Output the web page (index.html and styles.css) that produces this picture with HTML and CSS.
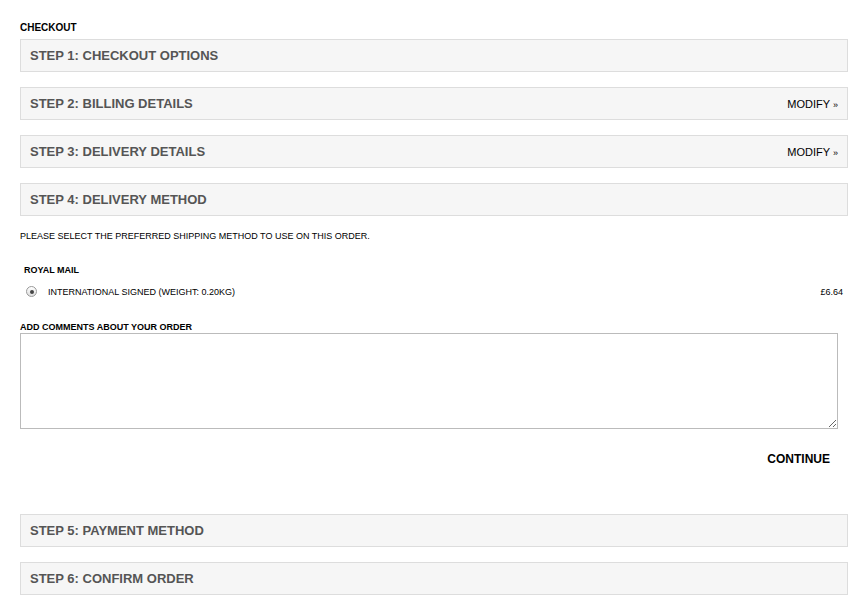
FILE: index.html
```html
<!DOCTYPE html>
<html>
<head>
<meta charset="utf-8">
<link rel="stylesheet" href="styles.css">
</head>
<body>
<div class="page">
  <h1 class="title">CHECKOUT</h1>
  <div class="panel"><span class="panel-title">STEP 1: CHECKOUT OPTIONS</span></div>
  <div class="panel"><span class="panel-title">STEP 2: BILLING DETAILS</span><a class="modify">MODIFY <span class="raquo">»</span></a></div>
  <div class="panel"><span class="panel-title">STEP 3: DELIVERY DETAILS</span><a class="modify">MODIFY <span class="raquo">»</span></a></div>
  <div class="panel"><span class="panel-title">STEP 4: DELIVERY METHOD</span></div>
  <div class="method">
    <p class="intro">PLEASE SELECT THE PREFERRED SHIPPING METHOD TO USE ON THIS ORDER.</p>
    <p class="carrier">ROYAL MAIL</p>
    <div class="option">
      <span class="radio"><span class="dot"></span></span>
      <span class="option-label">INTERNATIONAL SIGNED (WEIGHT: 0.20KG)</span>
      <span class="price">£6.64</span>
    </div>
    <p class="comments-label">ADD COMMENTS ABOUT YOUR ORDER</p>
    <textarea class="comments"></textarea>
    <div class="actions"><span class="continue">CONTINUE</span></div>
  </div>
  <div class="panel"><span class="panel-title">STEP 5: PAYMENT METHOD</span></div>
  <div class="panel"><span class="panel-title">STEP 6: CONFIRM ORDER</span></div>
</div>
</body>
</html>
```
FILE: styles.css
```css
html, body { margin: 0; padding: 0; background: #fff; }
body { font-family: "Liberation Sans", Arial, sans-serif; color: #000; }
.page { width: 828px; padding: 22px 0 0 20px; }
.title { font-size: 10px; font-weight: bold; margin: 0 0 5px; line-height: 12px; }
.panel {
  height: 31px;
  border: 1px solid #ddd;
  background: #f6f6f6;
  display: flex;
  align-items: center;
  justify-content: space-between;
  padding: 0 9px;
  margin-bottom: 15px;
}
.panel-title { font-size: 13px; font-weight: bold; color: #555; }
.modify { font-size: 11px; color: #000; }
.raquo { font-size: 9px; }
.intro { font-size: 9px; margin: 0 0 24px; line-height: 10px; }
.carrier { font-size: 9px; font-weight: bold; margin: 0 0 11px 4px; line-height: 10px; }
.option { display: flex; align-items: center; font-size: 9px; padding: 0 5px 0 6px; margin-bottom: 25px; }
.radio {
  width: 9px; height: 9px; border-radius: 50%;
  border: 1px solid #999; background: linear-gradient(#fff, #ddd);
  display: flex; align-items: center; justify-content: center;
  margin-right: 11px;
}
.dot { width: 4px; height: 4px; border-radius: 50%; background: #444; }
.option-label { flex: 1; }
.comments-label { font-size: 9px; font-weight: bold; margin: 0 0 1px; line-height: 10px; }
.comments {
  display: block;
  width: 818px; height: 96px;
  box-sizing: border-box;
  border: 1px solid #bbb;
  margin: 0;
  resize: vertical;
}
.actions { display: flex; justify-content: flex-end; padding: 23px 18px 0 0; height: 85px; box-sizing: border-box; }
.continue { font-size: 12px; font-weight: bold; }
```
